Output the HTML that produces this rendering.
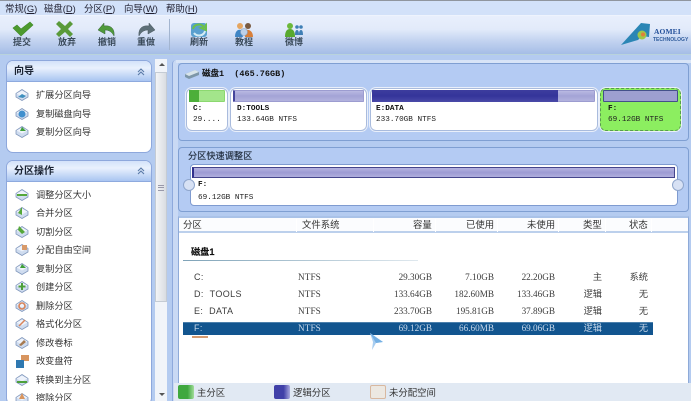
<!DOCTYPE html>
<html><head><meta charset="utf-8"><style>
html,body{margin:0;padding:0}
html{background:#b4cbf0;overflow:hidden}
body{width:691px;height:401px;overflow:hidden;position:relative;background:#b4cbf0;font-family:"Liberation Sans","WenQuanYi Zen Hei","Noto Sans CJK SC",sans-serif;color:#222;filter:blur(.3px)}
div,span,svg{position:absolute;box-sizing:border-box}
.t{white-space:nowrap;line-height:12px;height:12px}
.menu{font-size:9.4px;top:3px;color:#223}
.tb{font-size:9px;top:36px;width:30px;text-align:center;font-weight:bold;color:#3a4a5a}
.card{background:#fff;border:1px solid #8ea8dc;border-radius:7px;left:6px;width:146px;overflow:hidden}
.hd{left:0;top:0;right:0;height:21px;background:linear-gradient(#d3e2fa,#e9f1fd 35%,#a9c5f1);border-bottom:1px solid #8eaade}
.hd .t{left:7px;top:5px;font-size:10px;font-weight:bold;color:#1a2333}
.it{left:36px;font-size:9.2px;color:#333}
.ic{left:15px;width:14px;height:14px}
.pn{background:#b4cbf3;border:1px solid #7f9fd2;border-radius:4px;left:178px;width:511px}
.pt{background:#fff;border:1px solid #a9bbdd;border-radius:6px;box-shadow:0 0 0 1px #e9effa;top:88px;height:43px}
.bar{top:90px;height:12px;background:linear-gradient(#b9b9e2,#a3a3d6 50%,#b2b2de);border:1px solid #9c9cd0;border-radius:1px}
.m{font-family:"Liberation Mono",monospace;font-size:7.7px;color:#222}
.b{font-weight:bold;color:#111}
.th{top:219px;font-size:9.4px;color:#333}
.sep{top:219px;width:1px;height:13px;background:#c2d4ee;border-right:1px solid #fff}
.c{font-family:"Liberation Serif","WenQuanYi Zen Hei",serif;font-size:9.2px;color:#3c3c3c;text-align:right}
.r1{top:271px}.r2{top:288px}.r3{top:305px}.r4{top:322px;color:#c8d8ea}
.n{font-family:"Liberation Sans","WenQuanYi Zen Hei",sans-serif;text-align:left;font-size:9px;letter-spacing:.4px}
.fs{left:298px;text-align:left;font-size:9.2px;letter-spacing:.1px}
.cap{width:40px;left:392px}.us{width:60px;left:434px}.fr{width:60px;left:495px}.ty{width:40px;left:562px}.st{width:40px;left:608px}
.lg{top:385px;height:14px;border-radius:2px;width:16px}
.lt{top:387px;font-size:9.4px;color:#333}
</style></head><body>
<svg width="0" height="0" style="left:0;top:0"><defs>
<symbol id="d" viewBox="0 0 14 14"><path d="M7 1.5L13 5.5V9L7 12.5L1 9V5.5Z" fill="#cfdcef" stroke="#8399bd" stroke-width=".8"/><path d="M1.5 5.5L7 2.5L12.5 5.5L7 8.5Z" fill="#eef3fb"/></symbol>
</defs></svg>

<!-- menu -->
<div style="left:0;top:0;width:691px;height:16px;background:#d2e1f9;border-top:1px solid #8f959e"></div>
<div class="t menu" style="left:5px">常规(<u>G</u>)</div>
<div class="t menu" style="left:44px">磁盘(<u>D</u>)</div>
<div class="t menu" style="left:84px">分区(<u>P</u>)</div>
<div class="t menu" style="left:124px">向导(<u>W</u>)</div>
<div class="t menu" style="left:166px">帮助(<u>H</u>)</div>

<!-- toolbar -->
<div style="left:0;top:15px;width:691px;height:40px;background:linear-gradient(#e8effc,#e2eafa 35%,#c3d3f0 65%,#a5bde6);border-top:1px solid #eef3fd;border-bottom:1px solid #b9d3dc"></div>
<svg style="left:12px;top:21px" width="22" height="16" viewBox="0 0 22 16"><path d="M1 7L5 4L9 8L18 1L21 4L9 15Z" fill="#4d9a2e" stroke="#3e8a28" stroke-width=".6"/></svg>
<svg style="left:55px;top:21px" width="20" height="16" viewBox="0 0 20 16"><path d="M1 3L4 0L10 5L15 0L18 3L13 8L18 13L15 16L10 11L4 16L1 13L6 8Z" fill="#5a9a3a"/></svg>
<svg style="left:97px;top:21px" width="20" height="16" viewBox="0 0 20 16"><path d="M1 9L7 2V5C13 4 18 7 17 15C15 11 12 9 8 9V13Z" fill="#4f9a3a" stroke="#375f3a" stroke-width=".5"/></svg>
<svg style="left:136px;top:21px" width="20" height="16" viewBox="0 0 20 16"><path d="M19 9L13 2V5C7 4 2 7 3 15C5 11 8 9 12 9V13Z" fill="#5d6f78" stroke="#46555c" stroke-width=".5"/></svg>
<div style="left:169px;top:19px;width:1px;height:31px;background:#a3b5d0"></div>
<svg style="left:190px;top:22px" width="18" height="16" viewBox="0 0 18 16"><rect x="1" y="1" width="16" height="14" rx="3" fill="#5aa0cf"/><path d="M3 7C4 2 11 1 14 5L11 6L16 8V3L15 4" fill="none" stroke="#6cc04a" stroke-width="2"/><path d="M15 9C14 14 7 15 4 11" fill="none" stroke="#d4ecf4" stroke-width="2"/></svg>
<svg style="left:234px;top:22px" width="20" height="17" viewBox="0 0 20 17"><circle cx="6" cy="4" r="3" fill="#e5a560"/><circle cx="14" cy="4" r="3" fill="#7a5a40"/><path d="M1 15C1 9 4 7 7 8L9 15Z" fill="#3f85c4"/><path d="M11 15L11 8C15 7 19 9 19 15Z" fill="#d87f3a"/><circle cx="10" cy="10" r="3.5" fill="#bcd0e8" stroke="#8ea2bd" stroke-width=".6"/></svg>
<svg style="left:284px;top:22px" width="20" height="16" viewBox="0 0 20 16"><circle cx="6" cy="4" r="3" fill="#6cb83a"/><path d="M1 15C1 9 3 7 6 7S11 9 11 15Z" fill="#58a92e"/><circle cx="13" cy="5" r="1.8" fill="#3f7fb5"/><circle cx="17" cy="5" r="1.8" fill="#3f7fb5"/><path d="M11 13C11 9 12 8 13 8S15 9 15 13ZM15 13C15 9 16 8 17 8S19 9 19 13Z" fill="#3f7fb5"/></svg>
<div class="t tb" style="left:7px">提交</div>
<div class="t tb" style="left:52px">放弃</div>
<div class="t tb" style="left:92px">撤销</div>
<div class="t tb" style="left:131px">重做</div>
<div class="t tb" style="left:184px">刷新</div>
<div class="t tb" style="left:229px">教程</div>
<div class="t tb" style="left:279px">微博</div>
<svg style="left:621px;top:23px" width="30" height="24" viewBox="0 0 30 24"><path d="M0 22L20 0L29 1L28 14L21 13L17 17Z" fill="#2b86b5"/><circle cx="21" cy="12" r="4.5" fill="#9fc84a"/><circle cx="22" cy="11.5" r="2" fill="#e07f3a"/></svg>
<div class="t" style="left:654px;top:27px;font:bold 7.5px/10px 'Liberation Serif',serif;color:#23509a;letter-spacing:.1px">AOMEI</div>
<div class="t" style="left:653px;top:35px;font:bold 5px/10px 'Liberation Sans',sans-serif;color:#2f5c9c">TECHNOLOGY</div>

<!-- left cards -->
<div class="card" style="top:60px;height:93px"><div class="hd"><div class="t">向导</div></div></div>
<div class="card" style="top:160px;height:245px"><div class="hd"><div class="t">分区操作</div></div></div>
<svg style="left:137px;top:68px" width="8" height="8" viewBox="0 0 8 8"><path d="M1 4L4 1L7 4M1 7L4 4L7 7" fill="none" stroke="#5a7aa8" stroke-width="1.1"/></svg>
<svg style="left:137px;top:167px" width="8" height="8" viewBox="0 0 8 8"><path d="M1 4L4 1L7 4M1 7L4 4L7 7" fill="none" stroke="#5a7aa8" stroke-width="1.1"/></svg>

<svg class="ic" style="top:88px"><use href="#d"/><path d="M3 9L7 6L11 8L8 10Z" fill="#3f8fbe"/></svg>
<svg class="ic" style="top:107px"><use href="#d"/><circle cx="7" cy="7" r="3.5" fill="#3f8fce"/></svg>
<svg class="ic" style="top:125px"><use href="#d"/><path d="M7 2L11 6H5Z" fill="#3fa03a"/></svg>
<svg class="ic" style="top:188px"><use href="#d"/><path d="M2 6H12V8H2Z" fill="#55a83a"/></svg>
<svg class="ic" style="top:206px"><use href="#d"/><path d="M7 1V9L3 7Z" fill="#55a83a"/></svg>
<svg class="ic" style="top:225px"><use href="#d"/><path d="M4 1L10 7L7 9L3 5Z" fill="#55a83a"/></svg>
<svg class="ic" style="top:243px"><use href="#d"/><rect x="7" y="2" width="5" height="5" fill="#d89a6a"/></svg>
<svg class="ic" style="top:262px"><use href="#d"/><path d="M7 2L11 6H5Z" fill="#3fa03a"/></svg>
<svg class="ic" style="top:280px"><use href="#d"/><path d="M6 3H8V5.5H10.5V7.5H8V10H6V7.5H3.5V5.5H6Z" fill="#4da03a"/></svg>
<svg class="ic" style="top:299px"><use href="#d"/><circle cx="7" cy="7" r="3" fill="none" stroke="#d8845a" stroke-width="1.6"/></svg>
<svg class="ic" style="top:317px"><use href="#d"/><path d="M4 9L10 3" stroke="#d8845a" stroke-width="1.5"/></svg>
<svg class="ic" style="top:336px"><use href="#d"/><path d="M4 9L9 4L11 6L6 10Z" fill="#a67a50"/></svg>
<svg class="ic" style="top:354px"><rect x="6" y="1" width="8" height="6" fill="#d8955f"/><rect x="1" y="6" width="8" height="8" fill="#2f78b0"/></svg>
<svg class="ic" style="top:373px"><use href="#d"/><path d="M2 8H12V10H2Z" fill="#4da03a"/></svg>
<svg class="ic" style="top:392px"><use href="#d"/><path d="M7 1L10 7H4Z" fill="#d8955f"/></svg>

<div class="t it" style="top:89px">扩展分区向导</div>
<div class="t it" style="top:108px">复制磁盘向导</div>
<div class="t it" style="top:126px">复制分区向导</div>
<div class="t it" style="top:189px">调整分区大小</div>
<div class="t it" style="top:207px">合并分区</div>
<div class="t it" style="top:226px">切割分区</div>
<div class="t it" style="top:244px">分配自由空间</div>
<div class="t it" style="top:263px">复制分区</div>
<div class="t it" style="top:281px">创建分区</div>
<div class="t it" style="top:300px">删除分区</div>
<div class="t it" style="top:318px">格式化分区</div>
<div class="t it" style="top:337px">修改卷标</div>
<div class="t it" style="top:355px">改变盘符</div>
<div class="t it" style="top:374px">转换到主分区</div>
<div class="t it" style="top:392px">擦除分区</div>

<!-- scrollbar -->
<div style="left:155px;top:59px;width:12px;height:342px;background:#f1f4f9"></div>
<div style="left:155px;top:72px;width:12px;height:230px;background:linear-gradient(90deg,#f3f4f6,#d9dde2);border:1px solid #c4cbd4"></div>
<div style="left:159px;top:63px;border:3px solid transparent;border-bottom:3px solid #555;border-top:0"></div>
<div style="left:159px;top:393px;border:3px solid transparent;border-top:3px solid #555;border-bottom:0"></div>
<div style="left:158px;top:185px;width:6px;height:6px;border-top:1px solid #99a;border-bottom:1px solid #99a"></div>
<div style="left:158px;top:187px;width:6px;height:1px;background:#99a"></div>

<div style="left:172px;top:60px;width:6px;height:341px;background:#c9d9f4;border-left:1px solid #8ea9dc;border-radius:4px 0 0 0"></div>

<!-- disk panel -->
<div style="left:176px;top:60px;width:515px;height:3px;background:#d8e4f7"></div>
<div class="pn" style="top:63px;height:78px"></div>
<svg style="left:184px;top:70px" width="15" height="9" viewBox="0 0 15 9"><path d="M1 4L11 0L15 2V5L5 9L1 7Z" fill="#7d96a8"/><path d="M1 4L11 0L15 2L5 6Z" fill="#d8e4ea"/></svg>
<div class="t b" style="left:202px;top:68px;font:bold 8.5px/12px 'Liberation Mono','WenQuanYi Zen Hei',monospace">磁盘1 &nbsp;(465.76GB)</div>

<div class="pt" style="left:186px;width:42px"></div>
<div class="pt" style="left:230px;width:137px"></div>
<div class="pt" style="left:370px;width:228px"></div>
<div class="pt" style="left:600px;width:81px;background:#8cee60;border:1px dashed #5a9a50"></div>

<div class="bar" style="left:189px;width:36px;background:#a3e58b;border-color:#8cd870"></div>
<div style="left:189px;top:90px;width:10px;height:12px;background:#4caf3a"></div>
<div class="bar" style="left:233px;width:131px;border-left:2px solid #45459c"></div>
<div class="bar" style="left:372px;width:223px"></div>
<div style="left:372px;top:90px;width:186px;height:12px;background:linear-gradient(#3d3d9e,#34349a 50%,#4a4aa8)"></div>
<div class="bar" style="left:603px;width:75px;background:#9d9fd0;border:1px solid #44508a"></div>

<div class="t m b" style="left:193px;top:103px">C:</div>
<div class="t m" style="left:193px;top:114px">29....</div>
<div class="t m b" style="left:237px;top:103px">D:TOOLS</div>
<div class="t m" style="left:237px;top:114px">133.64GB NTFS</div>
<div class="t m b" style="left:376px;top:103px">E:DATA</div>
<div class="t m" style="left:376px;top:114px">233.70GB NTFS</div>
<div class="t m b" style="left:608px;top:103px">F:</div>
<div class="t m" style="left:608px;top:114px">69.12GB NTFS</div>

<!-- resize panel -->
<div class="pn" style="top:147px;height:65px"></div>
<div class="t" style="left:188px;top:150px;font-size:9.2px;color:#1e2a3a;-webkit-text-stroke:.15px #1e2a3a">分区快速调整区</div>
<div style="left:190px;top:164px;width:488px;height:42px;background:#fff;border:1px solid #7f9bd0;border-radius:4px"></div>
<div style="left:192px;top:167px;width:483px;height:11px;background:linear-gradient(#b5b3e0,#9d9bd3 50%,#b0aedd);border:1px solid #45458c;border-left:2px solid #2f2f8c"></div>
<div style="left:183px;top:179px;width:12px;height:12px;border-radius:50%;background:#d7e1f4;border:1px solid #8fa6cc"></div>
<div style="left:672px;top:179px;width:12px;height:12px;border-radius:50%;background:#d7e1f4;border:1px solid #8fa6cc"></div>
<div class="t m b" style="left:198px;top:179px">F:</div>
<div class="t m" style="left:198px;top:192px">69.12GB NTFS</div>

<!-- list -->
<div style="left:178px;top:216px;width:511px;height:168px;background:#fff;border:1px solid #8eaad8;border-top:2px solid #a9c2e8"></div>
<div style="left:179px;top:218px;width:509px;height:15px;background:#fbfcfe;border-bottom:2px solid #bcd0ec"></div>
<div class="sep" style="left:296px"></div>
<div class="sep" style="left:373px"></div>
<div class="sep" style="left:435px"></div>
<div class="sep" style="left:497px"></div>
<div class="sep" style="left:558px"></div>
<div class="sep" style="left:605px"></div>
<div class="sep" style="left:651px"></div>
<div class="t th" style="left:183px">分区</div>
<div class="t th" style="left:302px">文件系统</div>
<div class="t th" style="left:413px">容量</div>
<div class="t th" style="left:466px">已使用</div>
<div class="t th" style="left:527px">未使用</div>
<div class="t th" style="left:583px">类型</div>
<div class="t th" style="left:629px">状态</div>

<div class="t b" style="left:191px;top:246px;font-size:9.2px;-webkit-text-stroke:.15px #111">磁盘1</div>
<div style="left:183px;top:260px;width:235px;height:1px;background:linear-gradient(90deg,#7fa3b8,#dfe8ee)"></div>
<div style="left:183px;top:322px;width:470px;height:13px;background:#12558f;border-top:1px solid #4c80ac"></div>
<div style="left:192px;top:336px;width:16px;height:2px;background:#d49a70"></div>
<svg style="left:369px;top:332px" width="16" height="19" viewBox="0 0 16 19"><path d="M1 1L14 10L7 11L3 18L4 10Z" fill="#a8cdf0"/><path d="M1 1L14 10L7 11Z" fill="#74b0e4"/></svg>

<div class="t c n r1" style="left:194px">C:</div>
<div class="t c n r2" style="left:194px">D:&nbsp;&nbsp;TOOLS</div>
<div class="t c n r3" style="left:194px">E:&nbsp;&nbsp;DATA</div>
<div class="t c n r4" style="left:194px">F:</div>
<div class="t c fs r1">NTFS</div><div class="t c fs r2">NTFS</div><div class="t c fs r3">NTFS</div><div class="t c fs r4">NTFS</div>
<div class="t c cap r1">29.30GB</div><div class="t c cap r2">133.64GB</div><div class="t c cap r3">233.70GB</div><div class="t c cap r4">69.12GB</div>
<div class="t c us r1">7.10GB</div><div class="t c us r2">182.60MB</div><div class="t c us r3">195.81GB</div><div class="t c us r4">66.60MB</div>
<div class="t c fr r1">22.20GB</div><div class="t c fr r2">133.46GB</div><div class="t c fr r3">37.89GB</div><div class="t c fr r4">69.06GB</div>
<div class="t c ty r1">主</div><div class="t c ty r2">逻辑</div><div class="t c ty r3">逻辑</div><div class="t c ty r4">逻辑</div>
<div class="t c st r1">系统</div><div class="t c st r2">无</div><div class="t c st r3">无</div><div class="t c st r4">无</div>

<!-- legend -->
<div style="left:174px;top:383px;width:517px;height:18px;background:#e1e9f3"></div>
<div class="lg" style="left:178px;background:linear-gradient(90deg,#3fa83f 60%,#a2dc9a)"></div>
<div class="lg" style="left:274px;background:linear-gradient(90deg,#4040a8 60%,#a8a8de)"></div>
<div class="lg" style="left:370px;background:#ece8e2;border:1px solid #d8b8a0"></div>
<div class="t lt" style="left:197px">主分区</div>
<div class="t lt" style="left:293px">逻辑分区</div>
<div class="t lt" style="left:389px">未分配空间</div>
</body></html>
